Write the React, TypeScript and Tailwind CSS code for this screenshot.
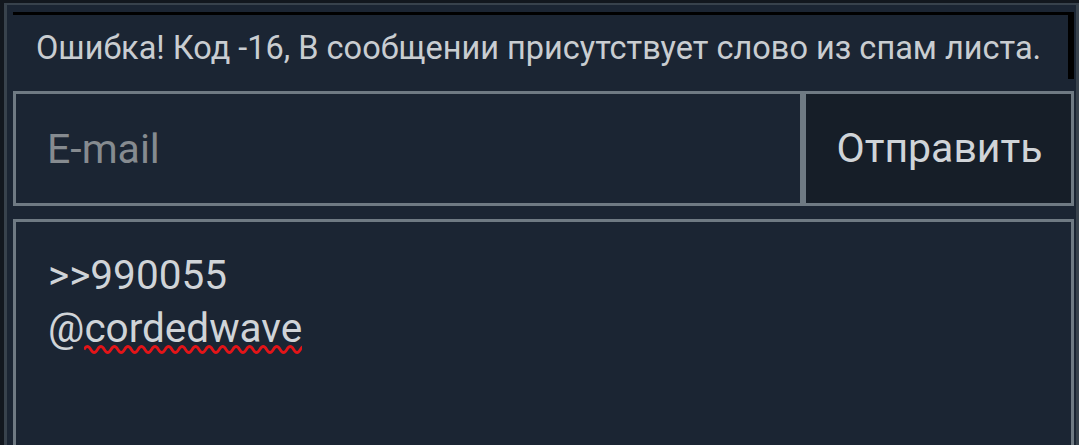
import React from 'react';

// spell-check squiggle under a word
const Squiggle = () => {
    const period = 13.6;
    const count = 17;
    let d = `M0 4.5 Q${period / 4} -1.5 ${period / 2} 4.5`;
    for (let i = 2; i <= count * 2; i++) d += ` T${(i * period) / 2} 4.5`;
    return (
        <svg className="absolute left-0 top-[41px] w-full h-[9px]" preserveAspectRatio="none" viewBox="0 0 219 9">
            <path d={d} fill="none" stroke="#e31519" strokeWidth="2.8" />
        </svg>
    );
};

export default function App() {
    return (
        <div className="w-[1079px] h-[445px] overflow-hidden bg-[#12171e] pt-[3px] font-['Roboto',sans-serif]">
            <div className="h-full ml-[4px] border-t-2 border-l-[3px] border-r-[3px] border-[#38424c] bg-[#1b2533] pl-[6px] pr-[2px] pt-[7px]">
                {/* Error message */}
                <div className="h-[67px] border-t-[3px] border-r-[6px] border-black pl-[23px] pt-[15px] text-[32.5px] leading-[37px] text-[#c9cdd1] whitespace-nowrap">
                    Ошибка! Код -16, В сообщении присутствует слово из спам листа.
                </div>

                {/* Email + submit */}
                <div className="mt-[12px] flex h-[115px]">
                    <input
                        type="text"
                        placeholder="E-mail"
                        className="w-[790px] h-full border-[3px] border-[#6f7a83] bg-transparent pl-[31px] text-[41px] text-[#d0d4d8] placeholder:text-[#868b90] outline-none"
                    />
                    <button className="flex-1 h-full border-[3px] border-[#6f7a83] bg-[#161e28] pl-[2px] text-[41px] text-[#d0d4d8]">
                        Отправить
                    </button>
                </div>

                {/* Message */}
                <div className="mt-[13px] h-[260px] border-[3px] border-[#6f7a83] pl-[32px] pt-[27px] text-[40.5px] leading-[53px] text-[#d0d4d8]">
                    <div>&gt;&gt;990055</div>
                    <div>
                        @<span className="relative">cordedwave<Squiggle /></span>
                    </div>
                </div>
            </div>
        </div>
    );
}
